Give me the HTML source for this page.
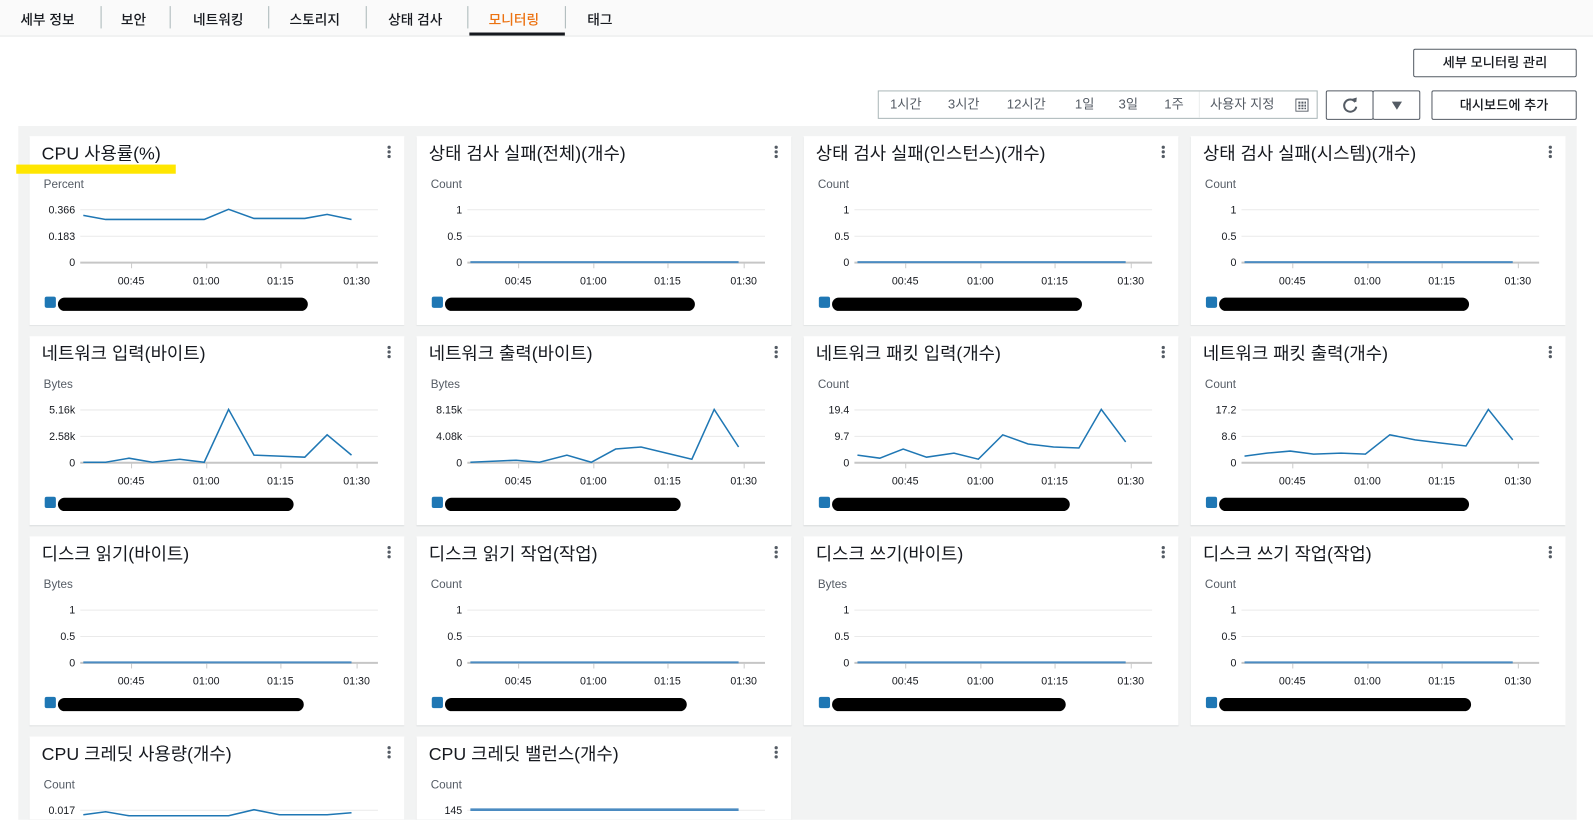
<!DOCTYPE html>
<html><head><meta charset="utf-8">
<style>
html,body{margin:0;padding:0;background:#fff;overflow:hidden;width:1593px;height:820px}
#w{position:absolute;left:0;top:0;width:1568px;height:807px;overflow:hidden;transform:scale(1.01594);transform-origin:0 0;font-family:"Liberation Sans","Noto Sans CJK KR",sans-serif;color:#16191f}
.tabs{position:absolute;left:0;top:0;width:1568px;height:35px;background:#fafafa;border-bottom:1px solid #e6e9e9}
.tab{position:absolute;top:8px;font-size:13.5px;font-weight:500;color:#16191f;white-space:nowrap}
.sep{position:absolute;top:6px;width:1px;height:22px;background:#aab7b8}
.btn{position:absolute;border:1px solid #545b64;background:#fff;font-size:13px;font-weight:500;text-align:center;box-sizing:border-box;border-radius:2px}
.panel{position:absolute;left:18px;top:124px;width:1534px;height:683px;background:#f2f3f3}
.card{position:absolute;width:369px;height:186px;background:#fff;box-shadow:0 1px 1px rgba(0,28,36,.15);overflow:hidden}
svg text{font-family:"Liberation Sans","Noto Sans CJK KR",sans-serif}
</style></head><body><div id="w">
<div class="tabs">
<div class="tab" style="left:20px">세부 정보</div><div class="sep" style="left:99px"></div>
<div class="tab" style="left:119px">보안</div><div class="sep" style="left:167px"></div>
<div class="tab" style="left:190px">네트워킹</div><div class="sep" style="left:264px"></div>
<div class="tab" style="left:285px">스토리지</div><div class="sep" style="left:360px"></div>
<div class="tab" style="left:382px">상태 검사</div><div class="sep" style="left:460px"></div>
<div class="tab" style="left:481px;color:#ec7211">모니터링</div>
<div style="position:absolute;left:462px;top:32px;width:94px;height:3px;background:#16191f"></div>
<div class="sep" style="left:556px"></div>
<div class="tab" style="left:578px">태그</div>
</div>
<div class="btn" style="left:1391px;top:48px;width:161px;height:28px;line-height:26px">세부 모니터링 관리</div>
<div style="position:absolute;left:864px;top:89px;width:433px;height:28px;border:1px solid #aab7b8;box-sizing:border-box;font-size:13px;color:#545b64;line-height:26px">
<span style="position:absolute;left:11px">1시간</span><span style="position:absolute;left:68px">3시간</span><span style="position:absolute;left:126px">12시간</span><span style="position:absolute;left:193px">1일</span><span style="position:absolute;left:236px">3일</span><span style="position:absolute;left:281px">1주</span>
<span style="position:absolute;left:315px;top:0;width:1px;height:26px;background:#eaeded"></span>
<span style="position:absolute;left:326px">사용자 지정</span>
<svg style="position:absolute;left:410px;top:7px" width="13" height="13"><rect x=".5" y=".5" width="12" height="12" fill="none" stroke="#545b64"/><g fill="#545b64"><rect x="3" y="3" width="2" height="2"/><rect x="6" y="3" width="2" height="2"/><rect x="9" y="3" width="1.5" height="2"/><rect x="3" y="6" width="2" height="2"/><rect x="6" y="6" width="2" height="2"/><rect x="9" y="6" width="1.5" height="2"/><rect x="3" y="9" width="2" height="1.5"/><rect x="6" y="9" width="2" height="1.5"/><rect x="9" y="9" width="1.5" height="1.5"/></g></svg>
</div>
<div class="btn" style="left:1305px;top:89px;width:47px;height:29px"><svg width="18" height="18" style="margin-top:5px"><path d="M14 5.5A6 6 0 1 0 15 10" fill="none" stroke="#545b64" stroke-width="2"/><path d="M10.5 2.5L15 5.5 15.5 1z" fill="#545b64"/></svg></div>
<div class="btn" style="left:1351px;top:89px;width:47px;height:29px"><svg width="12" height="10" style="margin-top:9px"><path d="M1 1h10L6 9z" fill="#545b64"/></svg></div>
<div class="btn" style="left:1409px;top:89px;width:143px;height:29px;line-height:27px">대시보드에 추가</div>
<div class="panel"></div>
<div id="cards"></div>
<div style="position:absolute;left:16px;top:162px;width:157px;height:9px;background:#ffe600;z-index:5"></div>
</div>
<script>
var X=[53,75,98,121,148,172,196,221,246,271,293,317];
var C=[
["CPU 사용률(%)","Percent",["0.366","0.183","0"],[78,82,82,82,82,82,72,81,81,81,77,82],246],
["상태 검사 실패(전체)(개수)","Count",["1","0.5","0"],null,246],
["상태 검사 실패(인스턴스)(개수)","Count",["1","0.5","0"],null,246],
["상태 검사 실패(시스템)(개수)","Count",["1","0.5","0"],null,246],
["네트워크 입력(바이트)","Bytes",["5.16k","2.58k","0"],[124,124,120,124,121,124,72,117,118,119,97,117],232],
["네트워크 출력(바이트)","Bytes",["8.15k","4.08k","0"],[124,123,122,124,117,124,111,109,115,121,72,109],232],
["네트워크 패킷 입력(개수)","Count",["19.4","9.7","0"],[117,120,111,119,115,121,97,106,109,110,72,104],234],
["네트워크 패킷 출력(개수)","Count",["17.2","8.6","0"],[118,115,113,116,115,116,97,102,105,108,72,102],246],
["디스크 읽기(바이트)","Bytes",["1","0.5","0"],null,242],
["디스크 읽기 작업(작업)","Count",["1","0.5","0"],null,238],
["디스크 쓰기(바이트)","Bytes",["1","0.5","0"],null,230],
["디스크 쓰기 작업(작업)","Count",["1","0.5","0"],null,248],
["CPU 크레딧 사용량(개수)","Count",["0.017","",""],[77,74,78,78,78,78,78,72,77,77,77,75],0],
["CPU 크레딧 밸런스(개수)","Count",["145","",""],"flat",0]
];
var L=[29,410,791,1172],T=[134,331,528,725],h="";
C.forEach(function(c,i){
 var l=L[i%4],t=T[Math.floor(i/4)];
 var s='<div class="card" style="left:'+l+'px;top:'+t+'px'+(i>=12?';height:82px':'')+'"><svg width="369" height="186">';
 s+='<text x="12" y="23" font-size="17.5" fill="#16191f">'+c[0]+'</text>';
 s+='<g fill="#545b64"><circle cx="354" cy="11" r="1.6"/><circle cx="354" cy="15.5" r="1.6"/><circle cx="354" cy="20" r="1.6"/></g>';
 s+='<text x="14" y="51" font-size="11.5" fill="#545b64">'+c[1]+'</text>';
 [72,98,124].forEach(function(y,k){
  if(!c[2][k])return;
  s+='<line x1="50" x2="343" y1="'+y+'.5" y2="'+y+'.5" stroke="'+(k==2?'#c6c6c6':'#eaeaea')+'" stroke-width="'+(k==2?2:1)+'"/>';
  s+='<text x="45" y="'+(y+4)+'" font-size="10.5" fill="#16191f" text-anchor="end">'+c[2][k]+'</text>';
 });
 if(i<12){
  [100,174,247,322].forEach(function(x,k){
   s+='<line x1="'+x+'.5" x2="'+x+'.5" y1="125" y2="130" stroke="#ccc"/>';
   s+='<text x="'+x+'" y="146" font-size="10.5" fill="#16191f" text-anchor="middle">'+["00:45","01:00","01:15","01:30"][k]+'</text>';
  });
 }
 if(c[3]=="flat") s+='<line x1="53" x2="317" y1="72" y2="72" stroke="#4b8bc1" stroke-width="2.5"/>';
 else if(c[3]){s+='<polyline fill="none" stroke="#1f77b4" stroke-width="1.5" points="'+X.map(function(x,k){return x+','+c[3][k]}).join(' ')+'"/>';}
 else s+='<line x1="53" x2="317" y1="124" y2="124" stroke="#4b8bc1" stroke-width="2"/>';
 if(c[4]){
  s+='<rect x="15" y="158" width="11" height="11" rx="2" fill="#1f77b4"/>';
  s+='<rect x="28" y="159" width="'+c[4]+'" height="13" rx="6.5" fill="#000"/>';
 }
 s+='</svg></div>';h+=s;
});
document.getElementById("cards").innerHTML=h;
</script>
</body></html>
